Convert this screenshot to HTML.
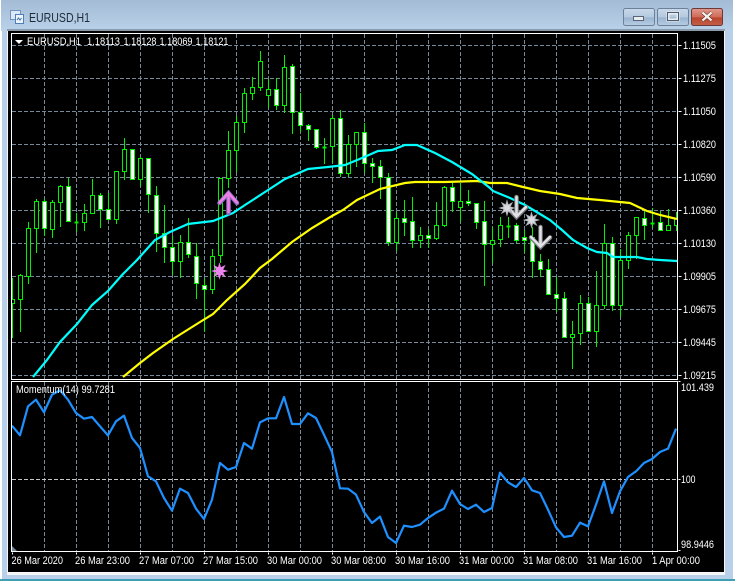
<!DOCTYPE html>
<html><head><meta charset="utf-8"><title>EURUSD,H1</title>
<style>
html,body{margin:0;padding:0;width:735px;height:582px;overflow:hidden;background:#fff}
svg{display:block}
text{font-family:"Liberation Sans",sans-serif;font-size:11px;fill:#fff}
.t{font-size:13px;fill:#1e2a38}
</style></head><body>
<svg width="735" height="582" viewBox="0 0 735 582" xmlns="http://www.w3.org/2000/svg">
<defs>
<linearGradient id="tb" x1="0" y1="0" x2="0" y2="1"><stop offset="0" stop-color="#a3bbd4"/><stop offset="1" stop-color="#bad1ea"/></linearGradient>
<linearGradient id="bn" x1="0" y1="0" x2="0" y2="1"><stop offset="0" stop-color="#c9d9ea"/><stop offset=".5" stop-color="#b4c9df"/><stop offset=".55" stop-color="#9bb5cf"/><stop offset="1" stop-color="#b7cde4"/></linearGradient>
<linearGradient id="cl" x1="0" y1="0" x2="0" y2="1"><stop offset="0" stop-color="#e0998c"/><stop offset=".5" stop-color="#cf6b58"/><stop offset=".55" stop-color="#b8442c"/><stop offset="1" stop-color="#c4604a"/></linearGradient>
<clipPath id="mc"><rect x="12" y="34" width="665" height="345"/></clipPath>
</defs>
<!-- window frame -->
<rect width="735" height="582" fill="#fff"/>
<rect x="1" y="0" width="732" height="31" fill="url(#tb)"/>
<rect x="2" y="31" width="731" height="549" fill="#b8d0ea"/>
<rect x="0" y="579" width="735" height="2" fill="#3f9fb5"/>
<rect x="7" y="29" width="718" height="2" fill="#8b9bab"/>
<rect x="7" y="31" width="718" height="544" fill="#f4f6f8"/>
<rect x="8" y="31" width="716" height="541" fill="#000"/>
<!-- title icon -->
<g shape-rendering="crispEdges">
<rect x="10.5" y="10.5" width="10" height="9" fill="#dce8f5" stroke="#6f93bd"/>
<rect x="15.5" y="14.5" width="8" height="9" fill="#eef4fb" stroke="#4e7fb8"/>
</g>
<path d="M17 20l1.5-2 1.5 2 1.5-2" fill="none" stroke="#3d6ea8"/>
<text class="t" x="29" y="22" textLength="61" lengthAdjust="spacingAndGlyphs">EURUSD,H1</text>
<!-- buttons -->
<rect x="623.5" y="8.5" width="31" height="17" rx="2" fill="url(#bn)" stroke="#6c8099"/>
<rect x="633.5" y="16.5" width="10" height="4" fill="#e8edf2" stroke="#5a6675"/>
<rect x="657.5" y="8.5" width="31" height="17" rx="2" fill="url(#bn)" stroke="#6c8099"/>
<rect x="668" y="13" width="10" height="7" fill="none" stroke="#e8edf2" stroke-width="3"/>
<rect x="667.5" y="12.5" width="11" height="8" fill="none" stroke="#4f5b6a"/>
<rect x="691.5" y="8.5" width="31" height="17" rx="2" fill="url(#cl)" stroke="#6d3a3a"/>
<path d="M702.5 12.5l9 8m0-8l-9 8" stroke="#5b2a22" stroke-width="3.5" fill="none"/>
<path d="M702.5 12.5l9 8m0-8l-9 8" stroke="#f4f0ee" stroke-width="2.3" fill="none"/>
<!-- grid -->
<g shape-rendering="crispEdges" fill="none">
<path transform="translate(.5,0)" stroke="#778899" stroke-dasharray="4 2" d="M44 34V379M76 34V379M108 34V379M140 34V379M172 34V379M204 34V379M236 34V379M268 34V379M300 34V379M332 34V379M364 34V379M396 34V379M428 34V379M460 34V379M492 34V379M524 34V379M556 34V379M588 34V379M620 34V379M652 34V379"/>
<path transform="translate(0,.5)" stroke="#778899" stroke-dasharray="4 2" d="M12 45H677M12 78H677M12 111H677M12 144H677M12 177H677M12 210H677M12 243H677M12 276H677M12 309H677M12 342H677M12 375H677"/>
<path transform="translate(.5,0)" stroke="#778899" stroke-dasharray="4 2" d="M44 382V551M76 382V551M108 382V551M140 382V551M172 382V551M204 382V551M236 382V551M268 382V551M300 382V551M332 382V551M364 382V551M396 382V551M428 382V551M460 382V551M492 382V551M524 382V551M556 382V551M588 382V551M620 382V551M652 382V551"/>
<path transform="translate(0,.5)" stroke="#c8c8c8" stroke-dasharray="4 2" d="M12 479H677"/>
</g>
<!-- candles -->
<g clip-path="url(#mc)">
<g shape-rendering="crispEdges" stroke="#00f000" fill="none">
<path transform="translate(.5,0)" d="M12 278V338M20 274V332M28 222V284M36 199V253M44 199V236M52 200V238M60 185V227M68 178V221M76 213V232M84 204V231M92 179V213M100 193V228M108 193V219M116 171V224M124 138V180M132 149V180M140 157V186M148 158V213M156 186V252M164 205V263M172 236V275M180 235V278M188 218V258M196 243V299M204 278V332M212 249V294M220 178V263M228 131V188M236 116V172M244 88V133M252 77V100M260 51V91M268 79V108M276 78V110M284 55V113M292 64V134M300 93V132M308 124V141M316 129V149M324 138V164M332 115V163M340 110V177M348 135V177M356 132V167M364 123V173M372 158V183M380 160V199M388 173V246M396 212V251M404 200V236M412 197V248M420 227V248M428 229V248M436 202V240M444 186V227M452 183V212M460 183V222M468 190V206M476 203V229M484 201V286M492 227V263M500 217V247M508 217V238M516 223V243M524 230V253M532 227V278M540 254V277M548 259V295M556 277V312M564 292V337M572 321V369M580 295V345M588 297V331M596 271V347M604 224V309M612 237V311M620 249V317M628 232V269M636 217V259M644 209V240M652 208V228M660 211V231M668 209V230M676 212V231"/>
<path transform="translate(.5,.5)" fill="#000" d="M10 299h4v4h-4zM18 275h4v24h-4zM26 228h4v48h-4zM34 201h4v27h-4zM50 202h4v27h-4zM58 186h4v16h-4zM82 213h4v9h-4zM90 195h4v18h-4zM114 171h4v48h-4zM122 149h4v22h-4zM138 158h4v21h-4zM178 242h4v19h-4zM210 256h4v33h-4zM218 178h4v77h-4zM226 150h4v28h-4zM234 122h4v28h-4zM242 93h4v29h-4zM250 87h4v6h-4zM258 61h4v26h-4zM266 89h4v6h-4zM282 67h4v38h-4zM330 118h4v28h-4zM346 144h4v29h-4zM354 132h4v12h-4zM394 218h4v24h-4zM418 235h4v5h-4zM434 225h4v13h-4zM442 187h4v38h-4zM458 201h4v6h-4zM490 240h4v4h-4zM498 225h4v14h-4zM570 334h4v3h-4zM578 303h4v30h-4zM594 305h4v26h-4zM602 243h4v62h-4zM618 260h4v45h-4zM626 235h4v25h-4zM634 217h4v18h-4zM666 225h4v5h-4zM674 218h4v7h-4z"/>
<path transform="translate(.5,.5)" fill="#fff" d="M42 201h4v27h-4zM66 186h4v35h-4zM98 195h4v14h-4zM106 209h4v10h-4zM130 149h4v30h-4zM146 158h4v36h-4zM154 195h4v38h-4zM162 233h4v14h-4zM170 247h4v14h-4zM186 242h4v12h-4zM194 256h4v27h-4zM202 285h4v4h-4zM274 89h4v16h-4zM290 66h4v46h-4zM298 112h4v13h-4zM306 125h4v4h-4zM314 129h4v18h-4zM338 118h4v55h-4zM362 132h4v31h-4zM370 163h4v3h-4zM378 166h4v11h-4zM386 177h4v65h-4zM402 218h4v4h-4zM410 221h4v19h-4zM426 235h4v3h-4zM450 187h4v14h-4zM466 201h4v2h-4zM474 203h4v19h-4zM482 221h4v23h-4zM514 225h4v15h-4zM522 237h4v3h-4zM530 237h4v24h-4zM538 261h4v8h-4zM546 269h4v25h-4zM554 294h4v4h-4zM562 298h4v39h-4zM586 303h4v28h-4zM610 243h4v62h-4zM642 218h4v7h-4zM658 222h4v8h-4z"/>
<path transform="translate(.5,.5)" stroke-width="2" d="M74 222h4M322 147h4M506 226h4M650 223h4"/>
</g>
<!-- moving averages -->
<polyline fill="none" stroke="#ffff00" stroke-width="2.2" points="123,377 140,363 153,353 173,339 200,322 213,314 227,300 245,284 260,268 272,259 292,242 312,228 332,216 343,210 357,200 380,189 405,183 415,182 445,182 477,181 490,183 507,183 523,187 540,191 560,194 577,198 600,200 630,203 647,211 660,215 677,219"/>
<polyline fill="none" stroke="#00ffff" stroke-width="2.2" points="33,377 47,360 60,342 77,324 92,305 108,291 122,275 137,260 155,240 170,232 188,224 213,221 233,213 245,205 265,192 285,179 308,169 328,167 345,165 362,158 378,151 392,150 405,145 417,145 435,153 452,162 462,168 472,174 490,188 493,191 510,198 525,205 540,214 550,220 562,230 573,240 587,248 597,252 607,253 613,257 637,257 647,259 660,260 677,261"/>
<!-- markers -->
<g fill="none" stroke-linecap="round">
<path d="M228.5 193V213M219.5 203L228.5 193L237 203" stroke="#8d6cc0" stroke-width="4.5"/>
<path d="M228.5 193V212M219.5 202.5L228.5 193L237 202.5" stroke="#f07fe8" stroke-width="2.5"/>
<path d="M516.5 197V216M507.5 207.5L516.5 217L526 207.5" stroke="#76787c" stroke-width="4.5"/>
<path d="M516.5 197V216M507.5 207L516.5 216.5L526 207" stroke="#e2e2e6" stroke-width="2.5"/>
<path d="M540.5 227V246M531 237.5L540.5 247L550 237.5" stroke="#76787c" stroke-width="4.5"/>
<path d="M540.5 227V246M531 237L540.5 246.500L550 237" stroke="#e2e2e6" stroke-width="2.5"/>
</g>
<path transform="translate(219.5,271)" fill="#ee82ee" stroke="#ee82ee" stroke-width="1" d="M0-7L1.2-3 4.95-4.95 3-1.2 7 0 3 1.2 4.95 4.95 1.2 3 0 7-1.2 3-4.95 4.95-3 1.2-7 0-3-1.2-4.95-4.95-1.2-3Z"/>
<path transform="translate(507,208)" fill="#dcdce2" stroke="#b0b2ba" stroke-width="1" d="M0-7L1.2-3 4.95-4.95 3-1.2 7 0 3 1.2 4.95 4.95 1.2 3 0 7-1.2 3-4.95 4.95-3 1.2-7 0-3-1.2-4.95-4.95-1.2-3Z"/>
<path transform="translate(531.5,220)" fill="#dcdce2" stroke="#b0b2ba" stroke-width="1" d="M0-7L1.2-3 4.95-4.95 3-1.2 7 0 3 1.2 4.95 4.95 1.2 3 0 7-1.2 3-4.95 4.95-3 1.2-7 0-3-1.2-4.95-4.95-1.2-3Z"/>
</g>
<!-- momentum -->
<polyline transform="translate(0,378) scale(1,.33333)" vector-effect="non-scaling-stroke" fill="none" stroke="#1e90ff" stroke-width="2.2" stroke-linejoin="round" points="12,143 20,172 28,85 36,65 44,103 52,50 60,37 68,65 76,105 84,122 92,117 100,145 108,172 116,130 124,113 132,180 140,210 148,295 156,310 164,360 172,398 180,332 188,345 196,392 204,423 212,365 220,255 228,275 236,267 244,195 252,212 260,133 268,121 276,121 284,57 292,138 300,138 308,106 316,120 324,170 332,222 340,331 348,332 356,350 364,402 372,435 380,416 388,477 396,495 404,443 412,447 420,440 428,420 436,404 444,392 452,338 460,378 468,393 476,380 484,402 492,390 500,284 508,313 516,327 524,300 532,337 540,345 548,395 556,448 564,477 572,473 580,434 588,445 596,380 604,310 612,405 620,340 628,297 636,280 644,255 652,243 660,222 668,212 676,152"/>
<path d="M12 546L17 551H12Z" fill="#778899"/>
<!-- borders + ticks -->
<g shape-rendering="crispEdges" fill="#fff">
<rect x="11" y="33" width="667" height="1"/>
<rect x="11" y="379" width="667" height="1"/>
<rect x="11" y="381" width="667" height="1"/>
<rect x="11" y="551" width="667" height="1"/>
<rect x="11" y="33" width="1" height="347"/>
<rect x="11" y="381" width="1" height="171"/>
<rect x="677" y="33" width="1" height="347"/>
<rect x="677" y="381" width="1" height="171"/>
</g>
<path transform="translate(.5,.5)" shape-rendering="crispEdges" stroke="#fff" d="M678 45h3M678 78h3M678 111h3M678 144h3M678 177h3M678 210h3M678 243h3M678 276h3M678 309h3M678 342h3M678 375h3M678 381h2M678 479h2M678 550h2M12 552v2M76 552v2M140 552v2M204 552v2M268 552v2M332 552v2M396 552v2M460 552v2M524 552v2M588 552v2M652 552v2"/>
<!-- labels -->
<path d="M15 40h8l-4 4z" fill="#fff"/>
<text x="27" y="45" textLength="54" lengthAdjust="spacingAndGlyphs">EURUSD,H1</text>
<text x="87" y="45" textLength="33" lengthAdjust="spacingAndGlyphs">1.18113</text>
<text x="123.5" y="45" textLength="33" lengthAdjust="spacingAndGlyphs">1.18128</text>
<text x="159.5" y="45" textLength="33" lengthAdjust="spacingAndGlyphs">1.18069</text>
<text x="195.5" y="45" textLength="33" lengthAdjust="spacingAndGlyphs">1.18121</text>
<text x="16" y="393" textLength="99" lengthAdjust="spacingAndGlyphs">Momentum(14) 99.7281</text>
<text x="683" y="49" textLength="33" lengthAdjust="spacingAndGlyphs">1.11505</text>
<text x="683" y="82" textLength="33" lengthAdjust="spacingAndGlyphs">1.11275</text>
<text x="683" y="115" textLength="33" lengthAdjust="spacingAndGlyphs">1.11050</text>
<text x="683" y="148" textLength="33" lengthAdjust="spacingAndGlyphs">1.10820</text>
<text x="683" y="181" textLength="33" lengthAdjust="spacingAndGlyphs">1.10590</text>
<text x="683" y="214" textLength="33" lengthAdjust="spacingAndGlyphs">1.10360</text>
<text x="683" y="247" textLength="33" lengthAdjust="spacingAndGlyphs">1.10130</text>
<text x="683" y="280" textLength="33" lengthAdjust="spacingAndGlyphs">1.09905</text>
<text x="683" y="313" textLength="33" lengthAdjust="spacingAndGlyphs">1.09675</text>
<text x="683" y="346" textLength="33" lengthAdjust="spacingAndGlyphs">1.09445</text>
<text x="683" y="379" textLength="33" lengthAdjust="spacingAndGlyphs">1.09215</text>
<text x="681" y="391" textLength="33" lengthAdjust="spacingAndGlyphs">101.439</text>
<text x="681" y="483" textLength="14.5" lengthAdjust="spacingAndGlyphs">100</text>
<text x="681" y="548" textLength="33" lengthAdjust="spacingAndGlyphs">98.9446</text>
<text x="11.5" y="564" textLength="51.5" lengthAdjust="spacingAndGlyphs">26 Mar 2020</text>
<text x="75" y="564" textLength="55" lengthAdjust="spacingAndGlyphs">26 Mar 23:00</text>
<text x="139" y="564" textLength="55" lengthAdjust="spacingAndGlyphs">27 Mar 07:00</text>
<text x="203" y="564" textLength="55" lengthAdjust="spacingAndGlyphs">27 Mar 15:00</text>
<text x="267" y="564" textLength="55" lengthAdjust="spacingAndGlyphs">30 Mar 00:00</text>
<text x="331" y="564" textLength="55" lengthAdjust="spacingAndGlyphs">30 Mar 08:00</text>
<text x="395" y="564" textLength="55" lengthAdjust="spacingAndGlyphs">30 Mar 16:00</text>
<text x="459" y="564" textLength="55" lengthAdjust="spacingAndGlyphs">31 Mar 00:00</text>
<text x="523" y="564" textLength="55" lengthAdjust="spacingAndGlyphs">31 Mar 08:00</text>
<text x="587" y="564" textLength="55" lengthAdjust="spacingAndGlyphs">31 Mar 16:00</text>
<text x="652" y="564" textLength="48" lengthAdjust="spacingAndGlyphs">1 Apr 00:00</text>
</svg>
</body></html>
